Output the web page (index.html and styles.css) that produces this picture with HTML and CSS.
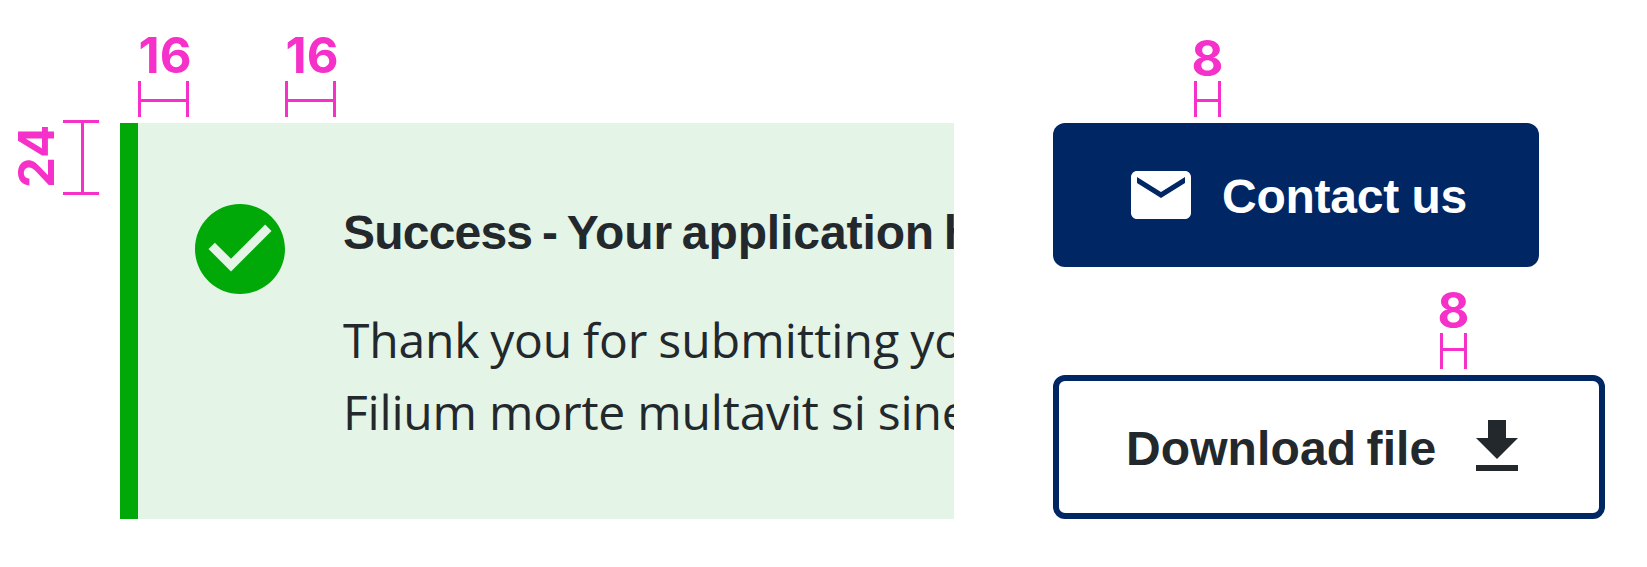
FILE: index.html
```html
<!DOCTYPE html>
<html lang="en">
<head>
<meta charset="utf-8">
<title>Icon spacing</title>
<link rel="stylesheet" href="styles.css">
</head>
<body>
<main class="board">
  <div class="side">
    <span class="num num-turned">24</span>
    <i class="bracket bracket-tall"></i>
  </div>
  <section class="alert-column">
    <div class="rulers">
      <div class="ruler"><span class="num">16</span><i class="bracket"></i></div>
      <div class="ruler"><span class="num">16</span><i class="bracket"></i></div>
    </div>
    <div class="alert">
      <svg class="alert-icon" viewBox="0 0 24 24"><path d="M12 2C6.48 2 2 6.48 2 12s4.48 10 10 10 10-4.48 10-10S17.52 2 12 2zm-2 15l-5-5 1.41-1.41L10 14.17l7.59-7.59L19 8l-9 9z"/></svg>
      <div class="alert-body">
        <h1 class="alert-title"><span class="status">Success</span> - Your application h</h1>
        <p class="alert-text line-one">Thank you for <span class="loose">submitting</span> yo</p>
        <p class="alert-text line-two">Filium morte multavit si sine</p>
      </div>
    </div>
  </section>
  <section class="button-column">
    <div class="ruler ruler-contact"><span class="num">8</span><i class="bracket bracket-small"></i></div>
    <a class="button button-solid"><svg class="icon" viewBox="0 0 24 24"><path d="M20 4H4c-1.1 0-1.99.9-1.99 2L2 18c0 1.1.9 2 2 2h16c1.1 0 2-.9 2-2V6c0-1.1-.9-2-2-2zm0 4l-8 5-8-5V6l8 5 8-5v2z"/></svg><span class="label label-contact">Contact us</span></a>
    <div class="ruler ruler-download"><span class="num">8</span><i class="bracket bracket-small bracket-high"></i></div>
    <a class="button button-outline"><span class="label label-download">Download file</span><svg class="icon" viewBox="0 0 24 24"><path d="M19 9h-4V3H9v6H5l7 7 7-7zM5 18v2h14v-2H5z"/></svg></a>
  </section>
</main>
</body>
</html>
```
FILE: styles.css
```css
* { box-sizing: border-box; margin: 0; }
body { background: #fff; color: #23282d; }
.board { display: flex; width: 1647px; height: 567px; overflow: hidden; }

/* spacing annotations */
.side { display: flex; gap: 6px; width: 120px; padding: 120px 0 0 17px; }
.num {
  font: 700 49px/40px Inter, sans-serif;
  color: #f531c9;
  white-space: nowrap;
}
.num-turned { width: 40px; height: 72px; writing-mode: vertical-rl; transform: rotate(180deg); text-align: center; }
.bracket {
  display: block;
  width: 51px;
  height: 36px;
  border: solid #f531c9;
  border-width: 0 3px;
  background: linear-gradient(#f531c9, #f531c9) 0 18px / 100% 3px no-repeat;
}
.bracket-small { width: 27px; }
.bracket-high { background-position: 0 15px; }
.bracket-tall {
  width: 36px;
  height: 75px;
  border-width: 3px 0;
  background: linear-gradient(#f531c9, #f531c9) 18px 0 / 3px 100% no-repeat;
}
.rulers { display: flex; gap: 96px; height: 123px; padding-left: 18px; }
.ruler { display: flex; flex-direction: column; justify-content: flex-end; align-items: center; width: 51px; height: 123px; padding-bottom: 6px; }
.ruler .num { margin-bottom: 5px; padding-left: 3px; }

/* alert */
.alert-column { width: 834px; }
.alert {
  display: flex;
  gap: 48px;
  height: 396px;
  padding: 72px 0 0 48px;
  border-left: 18px solid #00a908;
  background: #e4f4e6;
  overflow: hidden;
}
.alert-icon { flex: none; width: 108px; height: 108px; fill: #00a908; }
.alert-body { flex: 1; min-width: 0; padding: 2px 0 0 1px; white-space: nowrap; }
.alert-title { margin-bottom: 35px; font: 700 48px/72px "Liberation Sans", sans-serif; letter-spacing: -0.1px; word-spacing: -3.5px; }
.status { letter-spacing: -0.8px; }
.alert-text { font: 430 48px/72px "Open Sans", sans-serif; }
.line-one { word-spacing: -1.2px; letter-spacing: -0.2px; }
.loose { letter-spacing: 0.1px; }
.line-two { letter-spacing: -0.2px; }

/* buttons */
.button-column { margin-left: 99px; }
.ruler-contact { width: 27px; margin-left: 141px; }
.ruler-download { width: 27px; height: 108px; margin-left: 387px; }
.ruler-contact .num, .ruler-download .num { margin-bottom: 2px; padding-left: 0; }
.button { display: flex; align-items: center; height: 144px; padding: 0 72px; border-radius: 12px; font: 700 48px/72px "Liberation Sans", sans-serif; white-space: nowrap; }
.button-solid { gap: 24px; width: 486px; background: #002664; color: #fff; }
.button-outline { justify-content: space-between; width: 552px; padding: 0 66px; border: 6px solid #002664; }
.label { padding: 4px 0 0 1px; word-spacing: -3px; }
.label-contact { letter-spacing: -0.25px; word-spacing: -0.5px; }
.label-download { letter-spacing: 0.1px; }
.icon { flex: none; width: 72px; height: 72px; fill: currentColor; }
```
